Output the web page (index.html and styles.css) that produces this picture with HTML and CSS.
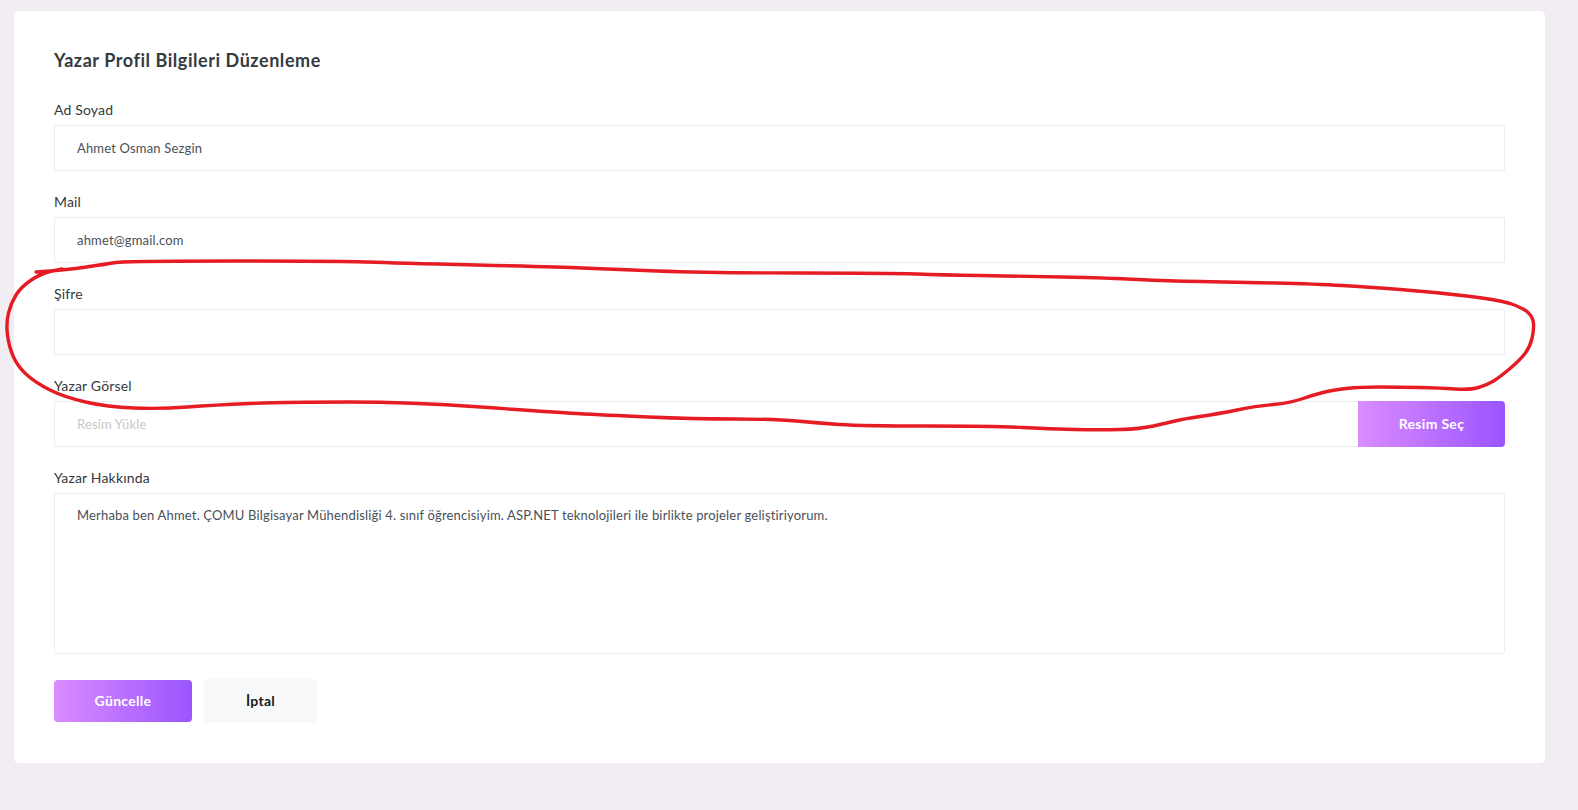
FILE: index.html
```html
<!DOCTYPE html>
<html lang="tr">
<head>
<meta charset="utf-8">
<title>Yazar Profil Bilgileri Düzenleme</title>
<link rel="stylesheet" href="styles.css">
</head>
<body>
<div class="page">
  <div class="card">
    <h4 class="card-title">Yazar Profil Bilgileri Düzenleme</h4>
    <form class="form">
      <div class="form-group">
        <label class="label">Ad Soyad</label>
        <input class="control" type="text" value="Ahmet Osman Sezgin">
      </div>
      <div class="form-group">
        <label class="label">Mail</label>
        <input class="control" type="text" value="ahmet@gmail.com">
      </div>
      <div class="form-group">
        <label class="label">Şifre</label>
        <input class="control" type="password" value="">
      </div>
      <div class="form-group">
        <label class="label">Yazar Görsel</label>
        <div class="input-group">
          <input class="control control-flex" type="text" placeholder="Resim Yükle">
          <button class="btn btn-gradient btn-append" type="button">Resim Seç</button>
        </div>
      </div>
      <div class="form-group form-group-last">
        <label class="label">Yazar Hakkında</label>
        <textarea class="control textarea">Merhaba ben Ahmet. ÇOMU Bilgisayar Mühendisliği 4. sınıf öğrencisiyim. ASP.NET teknolojileri ile birlikte projeler geliştiriyorum.</textarea>
      </div>
      <div class="actions">
        <button class="btn btn-gradient" type="button">Güncelle</button>
        <button class="btn btn-light" type="button">İptal</button>
      </div>
    </form>
  </div>
</div>
<svg class="annotation" width="1578" height="810" viewBox="0 0 1578 810" aria-hidden="true">
  <path d="M36 272 Q66 270 86.5 267 Q107 264 116 262.5 Q125 261 234 261 Q343 261 368 262 Q393 263 476.5 265 Q560 267 582 268 Q604 269 657.5 271 Q711 273 800 273 Q889 273 916 274 Q943 275 978.5 275.5 Q1014 276 1062 277 Q1110 278 1138.5 279.5 Q1167 281 1200 281.5 Q1233 282 1275 283 Q1317 284 1342 285.5 Q1367 287 1400 289.5 Q1433 292 1466.5 296 Q1500 300 1511.5 304 Q1523 308 1528 312.5 Q1533 317 1533.5 323.5 Q1534 330 1532 338.5 Q1530 347 1525 353.5 Q1520 360 1510 368.5 Q1500 377 1493.5 381 Q1487 385 1478.5 387.5 Q1470 390 1455 389 Q1440 388 1420 387.5 Q1400 387 1380 387 Q1360 387 1346.5 388.5 Q1333 390 1323 392.5 Q1313 395 1301.5 399 Q1290 403 1273.5 404.5 Q1257 406 1237 410 Q1217 414 1200 416.5 Q1183 419 1175 421 Q1167 423 1153.5 426 Q1140 429 1120 429.5 Q1100 430 1075 429.5 Q1050 429 1023 427.5 Q996 426 928.5 426 Q861 426 839.5 424.5 Q818 423 796.5 421 Q775 419 734 419 Q693 419 648.5 417 Q604 415 577 413.5 Q550 412 480.5 407 Q411 402 348.5 402 Q286 402 250 403.5 Q214 405 187.5 407 Q161 409 134 408 Q107 407 85.5 402 Q64 397 50 390 Q36 383 27 375 Q18 367 13.5 357 Q9 347 7.5 335 Q6 323 8.5 313 Q11 303 16 295 Q21 287 30.5 280.5 Q40 274 50 271.5 L62 269" fill="none" stroke="#e51c23" stroke-width="3.4" stroke-linecap="round" stroke-linejoin="round"/>
</svg>
</body>
</html>
```

FILE: styles.css
```css
* {
  box-sizing: border-box;
}

html, body {
  margin: 0;
  padding: 0;
}

body {
  background: #f2edf3;
  font-family: Lato, "Noto Sans", "Liberation Sans", sans-serif;
  color: #343a40;
  letter-spacing: 0.17px;
  width: 1578px;
  height: 810px;
  overflow: hidden;
  position: relative;
}

.page {
  padding: 11px 33px 0 14px;
}

.card {
  background: #ffffff;
  border-radius: 5px;
  padding: 40px;
}

.card-title {
  margin: 0 0 34px 0;
  font-size: 18px;
  line-height: 18px;
  font-weight: 700;
  letter-spacing: 0.55px;
  color: #343a40;
}

.form {
  margin: 0;
}

.form-group {
  margin-bottom: 24px;
}

.form-group-last {
  margin-bottom: 25px;
}

.label {
  display: block;
  font-size: 14px;
  line-height: 14px;
  margin-bottom: 8px;
  color: #343a40;
}

.control {
  display: block;
  width: 100%;
  height: 46px;
  border: 1px solid #ebedf2;
  border-radius: 2px;
  padding: 0 22px;
  font-family: Lato, "Noto Sans", "Liberation Sans", sans-serif;
  font-size: 13px;
  letter-spacing: 0.17px;
  color: #495057;
  background: #ffffff;
  outline: none;
}

.control::placeholder {
  color: #c9c8c8;
}

.input-group {
  display: flex;
}

.control-flex {
  flex: 1;
  border-right: none;
  border-radius: 2px 0 0 2px;
}

.textarea {
  height: 161px;
  padding: 12px 22px;
  line-height: 1.5;
  resize: none;
}

.btn {
  font-family: Lato, "Noto Sans", "Liberation Sans", sans-serif;
  font-size: 14px;
  line-height: 14px;
  font-weight: 700;
  letter-spacing: 0.3px;
  padding: 14px 40px;
  border: 0;
  border-radius: 4px;
  cursor: pointer;
}

.btn-gradient {
  background: linear-gradient(to right, #da8cff, #9a55ff);
  color: #ffffff;
  width: 138px;
  height: 42px;
  padding: 0;
}

.btn-append {
  width: 147px;
  height: 46px;
  border-radius: 0 4px 4px 0;
}

.btn-light {
  background: #f8f9fa;
  border: 1px solid #f8f9fa;
  color: #1b1b1b;
  width: 113px;
  height: 44px;
  padding: 0;
}

.actions {
  display: flex;
  align-items: center;
  gap: 12px;
}

.annotation {
  position: absolute;
  top: 0;
  left: 0;
  pointer-events: none;
}
```
